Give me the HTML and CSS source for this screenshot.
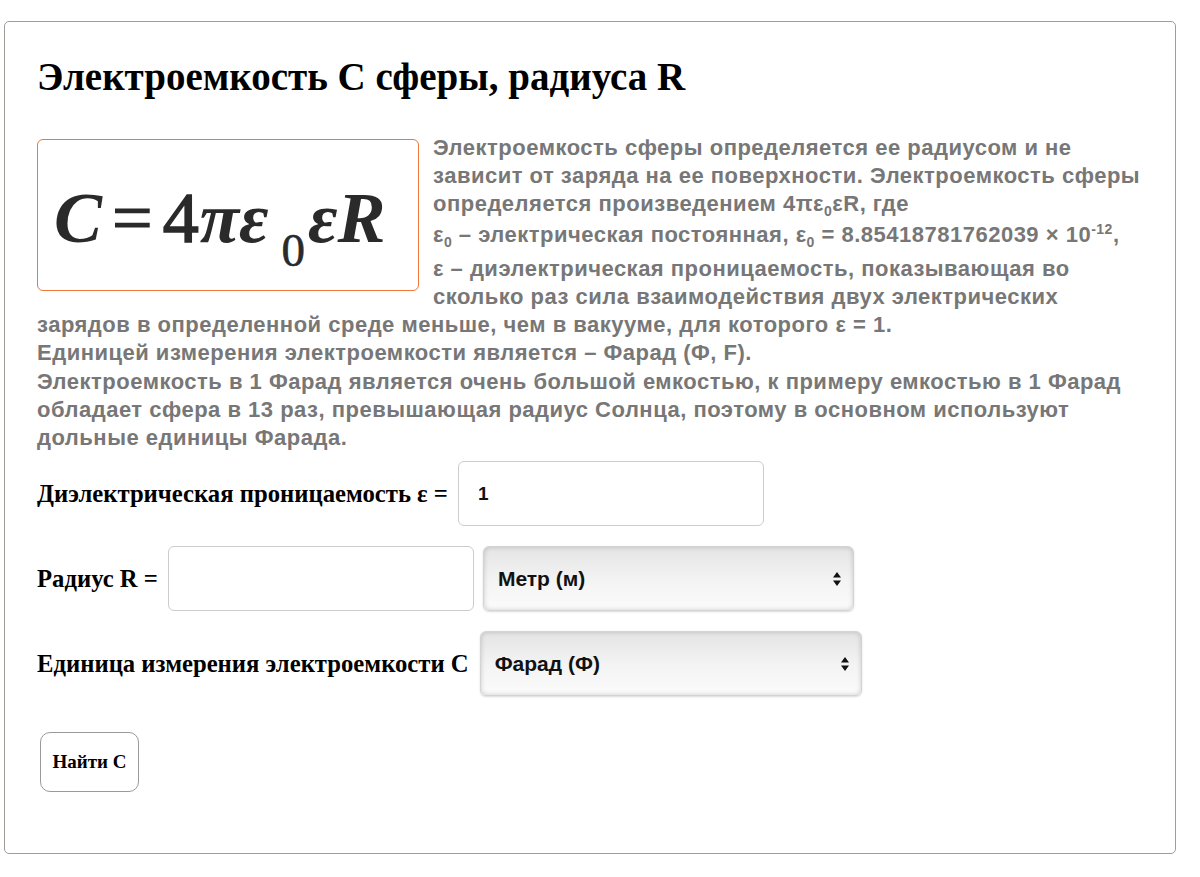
FILE: index.html
```html
<!DOCTYPE html>
<html lang="ru">
<head>
    <meta charset="UTF-8">
    <meta name="viewport" content="width=device-width, initial-scale=1.0">
    <title>Электроемкость сферы</title>
    <link rel="stylesheet" href="styles.css">
</head>
<body>
    <div class="card">
        <h1>Электроемкость С сферы, радиуса R</h1>

        <div class="description">
            <div class="formula"><span class="f-var">C</span><span class="f-eq">=</span><span class="f-num">4</span><span class="f-var">πε</span><span class="f-sub">0</span><span class="f-var">εR</span></div>
            Электроемкость сферы определяется ее радиусом и не зависит от заряда на ее поверхности. Электроемкость сферы определяется произведением 4πε<sub>0</sub>εR, где<br>
            <span class="const">ε<sub>0</sub> – электрическая постоянная, ε<sub>0</sub> = 8.85418781762039 × 10<sup>-12</sup>,</span><br>
            ε – диэлектрическая проницаемость, показывающая во сколько раз сила взаимодействия двух электрических зарядов в определенной среде меньше, чем в вакууме, для которого ε = 1.<br>
            Единицей измерения электроемкости является – Фарад (Ф, F).<br>
            Электроемкость в 1 Фарад является очень большой емкостью, к примеру емкостью в 1 Фарад обладает сфера в 13 раз, превышающая радиус Солнца, поэтому в основном используют дольные единицы Фарада.
        </div>

        <form class="calc">
            <div class="row">
                <label for="eps">Диэлектрическая проницаемость ε =</label>
                <input type="text" id="eps" class="field" value="1">
            </div>

            <div class="row">
                <label for="radius">Радиус R =</label>
                <input type="text" id="radius" class="field">
                <div class="select-wrap wide-1">
                    <select id="radiusUnit">
                        <option>Метр (м)</option>
                        <option>Сантиметр (см)</option>
                        <option>Миллиметр (мм)</option>
                    </select>
                    <svg class="arrows" width="8" height="14" viewBox="0 0 8 14"><path d="M4 0 L8 5.5 H0 Z M4 14 L8 8.5 H0 Z" fill="#111"/></svg>
                </div>
            </div>

            <div class="row">
                <label for="capUnit">Единица измерения электроемкости С</label>
                <div class="select-wrap wide-2">
                    <select id="capUnit">
                        <option>Фарад (Ф)</option>
                        <option>Микрофарад (мкФ)</option>
                        <option>Пикофарад (пФ)</option>
                    </select>
                    <svg class="arrows" width="8" height="14" viewBox="0 0 8 14"><path d="M4 0 L8 5.5 H0 Z M4 14 L8 8.5 H0 Z" fill="#111"/></svg>
                </div>
            </div>

            <button type="button" class="find">Найти С</button>
        </form>
    </div>
</body>
</html>
```

FILE: styles.css
```css
body {
    margin: 0;
    background-color: #fff;
    font-family: "Liberation Serif", "Times New Roman", serif;
    color: #000;
}

.card {
    margin: 21px 24px 24px 4px;
    border: 1px solid #a39c96;
    border-radius: 5px;
    padding: 26px 28px 60px 32px;
    height: 745px;
}

h1 {
    font-size: 39px;
    font-weight: bold;
    margin: 9px 0 37px 0;
    line-height: 40px;
}

.description {
    font-family: "Liberation Sans", Arial, sans-serif;
    font-weight: bold;
    font-size: 22px;
    line-height: 28.2px;
    color: #777;
    letter-spacing: 0.5px;
}

.description sub,
.description sup {
    font-size: 14px;
    line-height: 0;
}

.const {
    display: inline-block;
    padding: 2px 0 6px 0;
}

/* formula picture, drawn as text */
.formula {
    float: left;
    width: 382px;
    height: 152px;
    border: 1px solid #f0773a;
    border-radius: 6px;
    margin: 5px 14px 10px 0;
    box-sizing: border-box;
    padding: 42px 0 0 16px;
    white-space: nowrap;
    font-family: "Liberation Serif", "Times New Roman", serif;
    color: #2a2a2a;
    font-size: 72px;
    line-height: 72px;
    letter-spacing: 0;
    font-weight: normal;
}

.f-var {
    font-style: italic;
    font-weight: bold;
}

.f-eq {
    margin: 0 10px 0 10px;
    -webkit-text-stroke: 1.2px #2a2a2a;
}

.f-num {
    margin-right: 1px;
    -webkit-text-stroke: 1.6px #2a2a2a;
}

.f-sub {
    position: relative;
    top: 24px;
    font-size: 47px;
    line-height: 0;
    margin: 0 3px 0 13px;
    -webkit-text-stroke: 0.6px #2a2a2a;
}

.calc {
    margin-top: 9px;
}

.row {
    display: flex;
    align-items: center;
    margin-bottom: 20px;
}

.row label {
    font-size: 24.7px;
    font-weight: bold;
    margin-right: 10px;
}

.field {
    width: 306px;
    height: 65px;
    box-sizing: border-box;
    border: 1px solid #ccc;
    border-radius: 6px;
    padding: 0 19px;
    font-family: "Liberation Sans", Arial, sans-serif;
    font-weight: bold;
    font-size: 19px;
    color: #111;
}

.select-wrap {
    position: relative;
    margin-left: 9px;
}

.wide-1 {
    width: 371px;
}

.wide-2 {
    width: 382px;
    margin-left: 1px;
}

.select-wrap select {
    appearance: none;
    -webkit-appearance: none;
    width: 100%;
    height: 65px;
    border: 1px solid #d4d4d4;
    border-radius: 6px;
    padding: 0 14px;
    font-family: "Liberation Sans", Arial, sans-serif;
    font-weight: bold;
    font-size: 21px;
    color: #111;
    background: linear-gradient(#e4e4e4, #f4f4f4 55%, #fbfbfb);
    box-shadow: inset 0 0 5px rgba(0, 0, 0, 0.18), 0 1px 2px rgba(0, 0, 0, 0.15);
}

.arrows {
    position: absolute;
    right: 13px;
    top: 26px;
}

.find {
    margin-top: 16px;
    margin-left: 3px;
    width: 99px;
    height: 60px;
    border: 1px solid #9a9a9a;
    border-radius: 10px;
    background: #fff;
    font-family: "Liberation Serif", "Times New Roman", serif;
    font-weight: bold;
    font-size: 19px;
    color: #000;
}
```
